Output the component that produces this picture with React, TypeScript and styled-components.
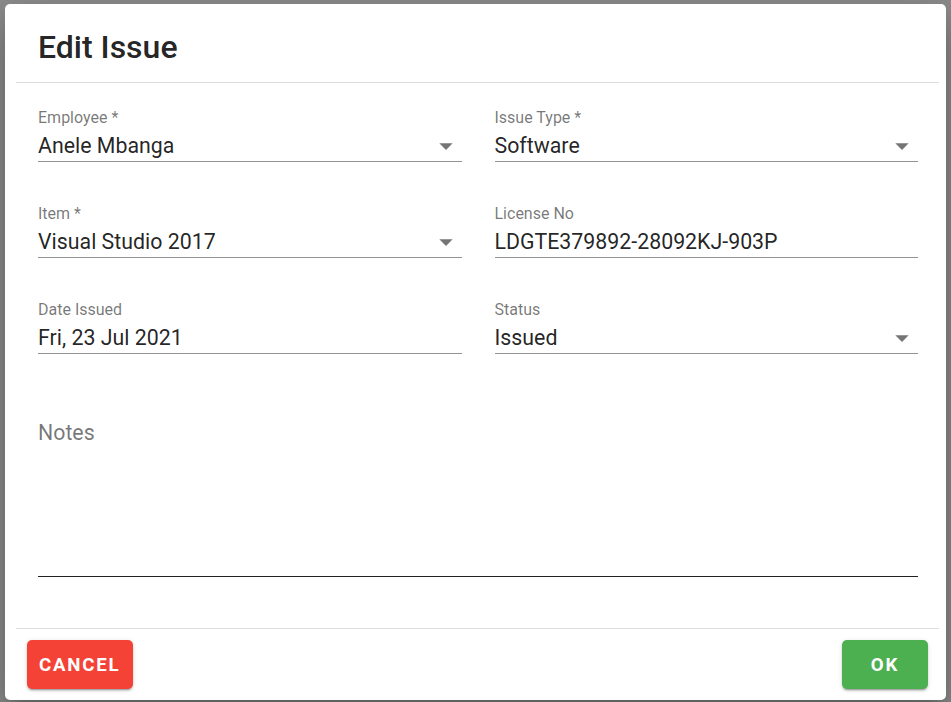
import styled, { createGlobalStyle } from "styled-components"

const GlobalStyle = createGlobalStyle`
html, body {
    margin: 0;
    padding: 0;
    background-color: #8d8d8d;
    font-family: Roboto, "Noto Sans", Arial, sans-serif;
}
`

type FieldProps = {
    label: string
    value: string
    select?: boolean
}

const ArrowIcon = () => (
    <svg width="32" height="32" viewBox="0 0 24 24">
        <path d="M7 10l5 5 5-5z" fill="rgba(0,0,0,0.54)" />
    </svg>
)

const Field = ({ label, value, select }: FieldProps) => {
    return (
        <FieldBox>
            <Label>{label}</Label>
            <InputRow>
                <Value>{value}</Value>
                {select && <ArrowHolder><ArrowIcon /></ArrowHolder>}
            </InputRow>
        </FieldBox>
    )
}

const App = () => {
    return (
        <Backdrop>
            <GlobalStyle />
            <Dialog>
                <Title>Edit Issue</Title>
                <Divider />
                <Content>
                    <Field label="Employee *" value="Anele Mbanga" select />
                    <Field label="Issue Type *" value="Software" select />
                    <Field label="Item *" value="Visual Studio 2017" select />
                    <Field label="License No" value="LDGTE379892-28092KJ-903P" />
                    <Field label="Date Issued" value="Fri, 23 Jul 2021" />
                    <Field label="Status" value="Issued" select />
                    <Notes>
                        <NotesLabel>Notes</NotesLabel>
                    </Notes>
                </Content>
                <Divider />
                <Actions>
                    <Button color="#f44336">Cancel</Button>
                    <Button color="#4caf50">OK</Button>
                </Actions>
            </Dialog>
        </Backdrop>
    )
}

export default App

const Backdrop = styled.div`
width: 951px;
height: 702px;
box-sizing: border-box;
padding: 4px 5px 2px 5px;
display: flex;
`
const Dialog = styled.div`
flex: 1;
background-color: #fff;
border-radius: 5px;
display: flex;
flex-direction: column;
box-shadow: 0px 11px 15px -7px rgba(0,0,0,0.2), 0px 24px 38px 3px rgba(0,0,0,0.14), 0px 9px 46px 8px rgba(0,0,0,0.12);
`
const Title = styled.div`
padding: 21px 30px 13px 33px;
font-size: 32px;
font-weight: 500;
line-height: 44px;
color: rgba(0,0,0,0.87);
`
const Divider = styled.div`
height: 1px;
margin: 0 7px 0 11px;
background-color: #dedede;
`
const Content = styled.div`
flex: 1;
padding: 26px 28px 0 33px;
display: grid;
grid-template-columns: 1fr 1fr;
column-gap: 33px;
row-gap: 43px;
align-content: start;
`
const FieldBox = styled.div`
display: flex;
flex-direction: column;
border-bottom: 1px solid rgba(0,0,0,0.42);
`
const Label = styled.div`
font-size: 16px;
line-height: 18px;
color: rgba(0,0,0,0.54);
`
const InputRow = styled.div`
display: flex;
align-items: center;
margin-top: 5px;
padding-bottom: 1px;
`
const Value = styled.div`
flex: 1;
font-size: 21.33px;
line-height: 28px;
color: rgba(0,0,0,0.87);
white-space: nowrap;
`
const ArrowHolder = styled.div`
display: flex;
width: 32px;
height: 28px;
align-items: center;
justify-content: center;
`
const Notes = styled.div`
grid-column: 1 / -1;
height: 157px;
margin-top: 22px;
border-bottom: 1px solid rgba(0,0,0,0.87);
`
const NotesLabel = styled.div`
font-size: 21.33px;
line-height: 28px;
color: rgba(0,0,0,0.54);
`
const Actions = styled.div`
display: flex;
justify-content: space-between;
align-items: center;
padding: 11px 18px 11px 22px;
`
const Button = styled.button<{ color: string }>`
height: 49px;
padding: 0 12px;
min-width: 86px;
border: none;
border-radius: 5px;
background-color: ${p => p.color};
color: #fff;
font-family: Roboto, "Noto Sans", Arial, sans-serif;
font-size: 18.67px;
font-weight: 700;
letter-spacing: 1.8px;
text-transform: uppercase;
box-shadow: 0px 3px 1px -2px rgba(0,0,0,0.2), 0px 2px 2px 0px rgba(0,0,0,0.14), 0px 1px 5px 0px rgba(0,0,0,0.12);
cursor: pointer;
`
